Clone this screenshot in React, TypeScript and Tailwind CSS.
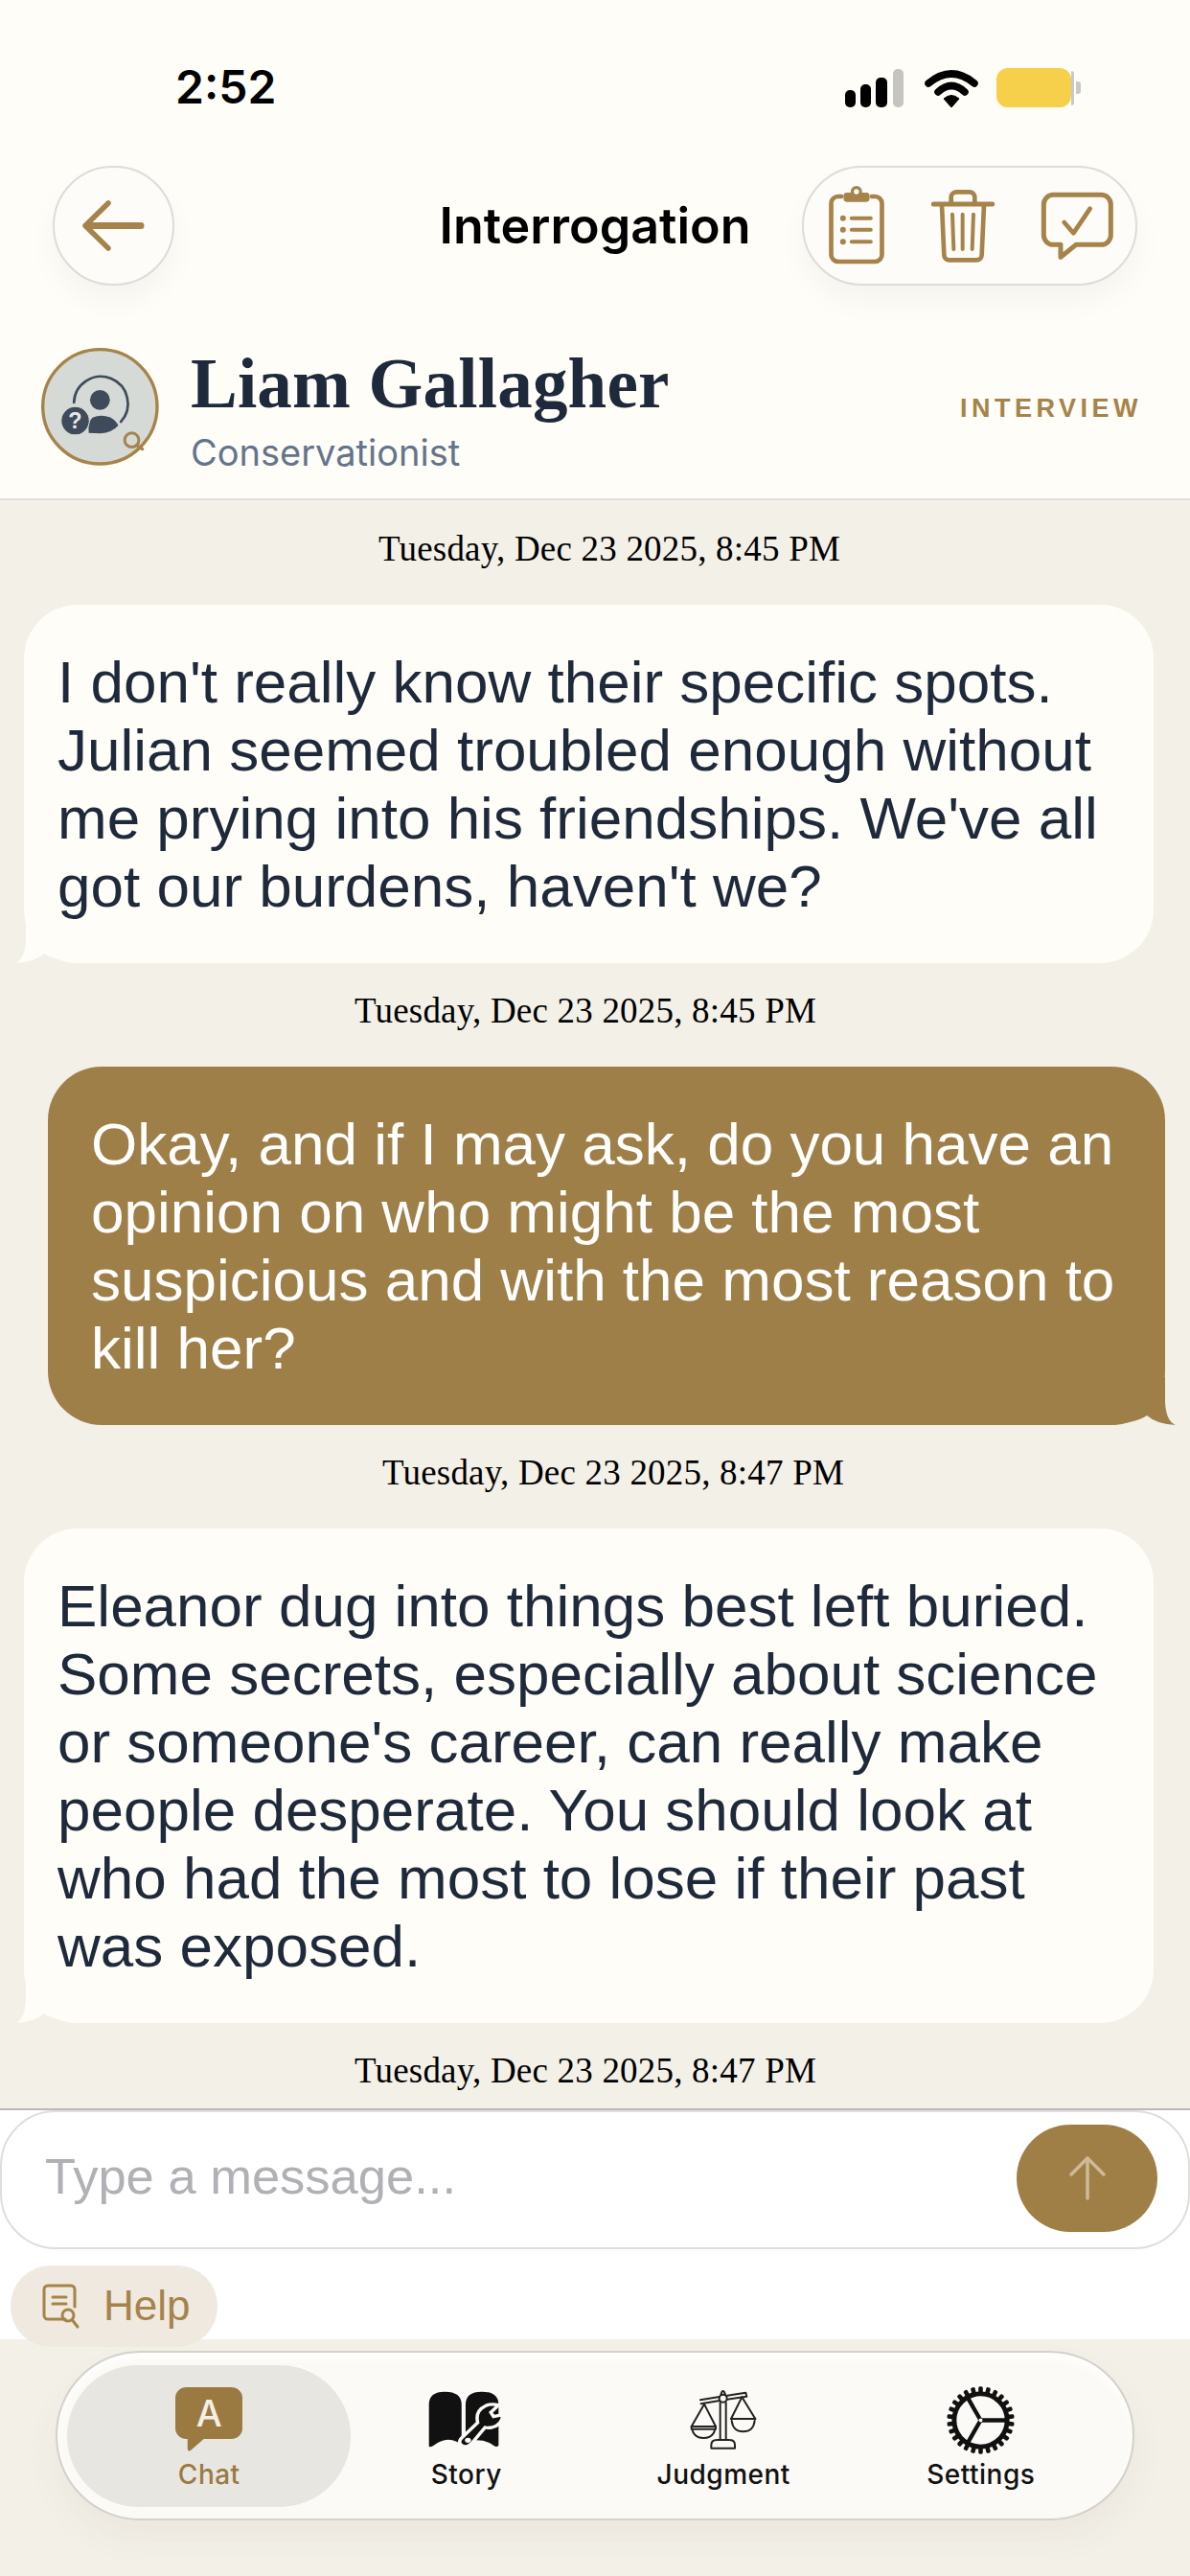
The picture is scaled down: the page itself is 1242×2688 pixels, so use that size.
import React from 'react';

const GOLD = '#a5834a';
const INK = '#111111';

const SignalIcon = () => (
  <svg width="62" height="40" viewBox="0 0 62 40">
    <rect x="0" y="22" width="11" height="18" rx="5" fill="#000" />
    <rect x="16" y="16" width="11" height="24" rx="5" fill="#000" />
    <rect x="32" y="9" width="12" height="31" rx="5" fill="#000" />
    <rect x="50" y="0" width="11" height="40" rx="5" fill="#c4c4c0" />
  </svg>
);

const WifiIcon = () => (
  <svg width="56" height="40" viewBox="0 0 56 40">
    <path d="M4 15 Q28 -5 52 15" fill="none" stroke="#000" strokeWidth="7.5" strokeLinecap="round" />
    <path d="M14 24 Q28 11 42 24" fill="none" stroke="#000" strokeWidth="7.5" strokeLinecap="round" />
    <path d="M20 31 Q28 24 36 31 L28 40 Z" fill="#000" stroke="#000" strokeWidth="1" strokeLinejoin="round" />
  </svg>
);

const BackIcon = () => (
  <svg width="66" height="54" viewBox="0 0 66 54" fill="none" stroke={GOLD} strokeLinecap="round" strokeLinejoin="round">
    <path d="M5 26.5 H61" strokeWidth="7" />
    <path d="M27 3 L3 26.5 L27 50" strokeWidth="5.5" />
  </svg>
);

const ClipboardIcon = () => (
  <svg width="62" height="85" viewBox="125 110 185 255" fill="none" stroke={GOLD} strokeWidth="14" strokeLinecap="round" strokeLinejoin="round">
    <path d="M170 146 H160 a22 22 0 0 0 -22 22 V328 a22 22 0 0 0 22 22 H275 a22 22 0 0 0 22 -22 V168 a22 22 0 0 0 -22 -22 H265" />
    <rect x="177" y="134" width="81" height="29" rx="10" fill={GOLD} stroke="none" />
    <circle cx="217" cy="131" r="13" fill="#fdfcf8" strokeWidth="10" />
    <g fill={GOLD} stroke="none">
      <circle cx="175" cy="214" r="9" />
      <circle cx="175" cy="250" r="9" />
      <circle cx="175" cy="288" r="9" />
    </g>
    <path d="M202 214 H262 M202 250 H262 M202 288 H262" strokeWidth="12" />
  </svg>
);

const TrashIcon = () => (
  <svg width="68" height="78" viewBox="447 115 204 234" fill="none" stroke={GOLD} strokeLinecap="round" strokeLinejoin="round">
    <path d="M457 163 H641" strokeWidth="15" />
    <path d="M512 158 V142 a17 17 0 0 1 17 -17 H569 a17 17 0 0 1 17 17 V158" strokeWidth="14" />
    <path d="M483 166 L490 322 a16 16 0 0 0 16 16 H592 a16 16 0 0 0 16 -16 L615 166" strokeWidth="14" />
    <path d="M516 195 L520 304 M548 195 V304 M582 195 L578 304" strokeWidth="12" />
  </svg>
);

const ChatCheckIcon = () => (
  <svg width="76" height="72" viewBox="792 122 228 216" fill="none" stroke={GOLD} strokeLinecap="round" strokeLinejoin="round">
    <path d="M832 132 H982 a30 30 0 0 1 30 30 V258 a30 30 0 0 1 -30 30 H903 L855 327 V288 H832 a30 30 0 0 1 -30 -30 V162 a30 30 0 0 1 30 -30 Z" strokeWidth="15" />
    <path d="M866 218 L895 252 L947 175" strokeWidth="14" />
  </svg>
);

const AvatarIcon = () => (
  <svg width="123" height="123" viewBox="70 70 367 367" className="shrink-0">
    <circle cx="253" cy="253" r="178" fill="#d5dad6" stroke={GOLD} strokeWidth="10" />
    <path d="M172 240 A84 84 0 1 1 318 300" fill="none" stroke="#3f4a5a" strokeWidth="8" strokeLinecap="round" />
    <circle cx="253" cy="232" r="31" fill="#3f4a5a" />
    <path d="M218 335 Q214 300 230 287 Q255 275 285 286 Q303 295 310 312 Q290 335 255 336 Z" fill="#3f4a5a" />
    <circle cx="176" cy="297" r="44" fill="#3f4a5a" stroke="#d5dad6" strokeWidth="3" />
    <text x="176" y="322" textAnchor="middle" fontSize="70" fontWeight="700" fill="#e5e8e6" fontFamily="'Liberation Sans', sans-serif">?</text>
    <circle cx="352" cy="357" r="22" fill="#d5dad6" stroke={GOLD} strokeWidth="9" />
    <path d="M368 373 L385 385" stroke={GOLD} strokeWidth="10" strokeLinecap="round" />
  </svg>
);

const HelpIcon = () => (
  <svg width="40" height="48" viewBox="0 0 40 48" fill="none" stroke={GOLD} strokeLinecap="round" strokeLinejoin="round" strokeWidth="3">
    <path d="M24 37 H6 a4 4 0 0 1 -4 -4 V6 a4 4 0 0 1 4 -4 H30 a4 4 0 0 1 4 4 V24" />
    <path d="M11 14 H25 M11 21 H25" />
    <circle cx="27" cy="33" r="6" />
    <path d="M31.5 38 L37 45" />
  </svg>
);

const SendIcon = () => (
  <svg width="40" height="48" viewBox="0 0 40 48" fill="none" stroke="#cdbb98" strokeLinecap="round" strokeLinejoin="round">
    <path d="M20 3 V45" strokeWidth="3.5" />
    <path d="M3 20 L20 3 L37 20" strokeWidth="3.5" />
  </svg>
);

const ChatTabIcon = () => (
  <div className="relative flex h-[68px] w-[70px] justify-center">
    <svg width="70" height="68" viewBox="0 0 66 68" preserveAspectRatio="none" className="absolute left-0 top-0">
      <path d="M11 0 H55 a11 11 0 0 1 11 11 V43 a11 11 0 0 1 -11 11 H28 L15 66 Q12 68 12 63 V54 H11 a11 11 0 0 1 -11 -11 V11 a11 11 0 0 1 11 -11 Z" fill="#9b7a41" />
    </svg>
    <span className="relative font-['Inter',sans-serif] text-[38px] leading-[54px] font-medium text-[#f3efe6]">A</span>
  </div>
);

const StoryIcon = () => (
  <svg width="80" height="60" viewBox="836 98 228 180" preserveAspectRatio="none">
    <path d="M838 270 V140 Q838 100 885 100 Q935 100 935 140 V250 Q928 262 920 256 Q885 240 850 270 Q838 276 838 270 Z" fill={INK} />
    <path d="M947 140 Q947 100 995 100 Q1045 100 1045 140 V268 Q1040 276 1030 268 Q1000 244 947 256 Z" fill={INK} />
    <path
      d="M935 245 L983 197 Q975 160 1005 145 Q1020 136 1045 142 L1022 165 L1030 178 L1058 172 Q1055 205 1025 212 Q1012 214 1005 212 L965 262 Q945 280 932 265 Q925 255 935 245 Z"
      fill={INK}
      stroke="#fbfaf6"
      strokeWidth="10"
    />
    <ellipse cx="954" cy="252" rx="9" ry="8" fill="#fbfaf6" />
  </svg>
);

const JudgmentIcon = () => (
  <svg width="70" height="64" viewBox="55 93 210 192" fill="none" stroke="#222" strokeWidth="6" strokeLinecap="round" strokeLinejoin="round">
    <path d="M88 127 L148 117 M172 113 L230 104 L233 116 L172 125 M148 129 L90 139 Z" />
    <circle cx="159" cy="122" r="12" />
    <path d="M152 110 Q159 88 166 110" />
    <path d="M150 135 V250 M168 135 V250" />
    <path d="M122 268 Q122 252 140 252 H178 Q196 252 196 268 V278 H122 Z" />
    <path d="M100 140 L60 210 M100 140 L136 210" />
    <path d="M60 210 H136 V218 H60 Z M62 218 Q68 246 98 246 Q128 246 134 218" />
    <path d="M218 118 L184 186 M218 118 L260 186" />
    <path d="M184 186 H260 M186 192 Q190 226 222 226 Q254 226 258 192" />
  </svg>
);

const GearIcon = () => (
  <svg width="73" height="73" viewBox="828 74 220 222">
    <circle cx="938" cy="185" r="84" fill="none" stroke={INK} strokeWidth="15" />
    {Array.from({ length: 26 }).map((_, i) => (
      <rect key={i} x="931" y="78" width="14" height="26" rx="5" fill={INK} transform={`rotate(${(i * 360) / 26} 938 185)`} />
    ))}
    <g stroke={INK} strokeWidth="13" strokeLinecap="round">
      <path d="M938 185 H1016" />
      <path d="M938 185 L899 253" />
      <path d="M938 185 L899 117" />
    </g>
    <circle cx="938" cy="185" r="6" fill="#fbfaf6" />
  </svg>
);

const BubbleTail = ({ side, color }: { side: 'left' | 'right'; color: string }) => (
  <svg
    width="70"
    height="50"
    viewBox="0 0 70 50"
    className={side === 'right' ? 'absolute bottom-0 right-[-11px]' : 'absolute bottom-0 left-[-9px] -scale-x-100'}
  >
    <path d="M0 50 Q28 48 40 40 Q50 49 70 50 Q60 46 59 26 L59 0 L0 0 Z" fill={color} />
  </svg>
);

const Timestamp = ({ children, offset }: { children: string; offset: string }) => (
  <div className={`mt-7 mb-9 h-11 whitespace-nowrap font-['Liberation_Serif',serif] text-[37px] leading-[44px] tracking-[0.2px] text-black ${offset}`}>
    {children}
  </div>
);

const IncomingBubble = ({ children }: { children: string }) => (
  <div className="relative ml-[25px] w-[1179px] rounded-[56px] bg-[#fffdf7] py-[45px] pl-[35px] pr-[20px] text-[62px] leading-[71px] text-[#1e293b]">
    <BubbleTail side="left" color="#fffdf7" />
    <span className="relative">{children}</span>
  </div>
);

const NavItem = ({ icon, label, active }: { icon: React.ReactNode; label: string; active?: boolean }) => (
  <div className="relative flex flex-col items-center pt-[36px]">
    {active && <div className="absolute bottom-[12px] left-[-14px] right-[-13px] top-[13px] rounded-[75px] bg-[#e8e6e1]" />}
    <div className="relative flex h-[68px] items-center justify-center">{icon}</div>
    <span className={`relative mt-[6px] font-['Inter',sans-serif] text-[28px] leading-[34px] font-medium tracking-[0.5px] ${active ? 'text-[#9b7a41]' : 'text-[#111]'}`}>
      {label}
    </span>
  </div>
);

export default function App() {
  return (
    <div className="flex h-[2688px] w-[1242px] flex-col overflow-hidden bg-[#f3f0e8] font-['Liberation_Sans',sans-serif]">
      {/* Header */}
      <header className="h-[522px] shrink-0 border-b-2 border-[#e0deda] bg-[#fffdf7]">
        <div className="flex h-[173px] items-start justify-between pl-[183px] pr-[114px] pt-[71px]">
          <span className="font-['Inter',sans-serif] text-[48px] leading-[40px] font-semibold text-black">2:52</span>
          <div className="flex items-center">
            <SignalIcon />
            <div className="ml-[21px]"><WifiIcon /></div>
            <div className="ml-[19px] flex items-center">
              <div className="h-[41px] w-[78px] rounded-[12px] bg-[#f6cf4b]" />
              <div className="h-[36px] w-[3px] rounded-r-[3px] bg-[#c9c9c5]" />
              <div className="ml-[2px] h-[13px] w-[5px] rounded-r-[3px] bg-[#c9c9c5]" />
            </div>
          </div>
        </div>

        <div className="grid h-[125px] grid-cols-[1fr_auto_1fr] items-center px-[55px]">
          <div className="flex h-[125px] w-[127px] items-center justify-center rounded-full border-2 border-[#dcdcd8] bg-[#fdfcf8] shadow-[0_16px_30px_rgba(0,0,0,0.04)]">
            <BackIcon />
          </div>
          <h1 className="font-['Inter',sans-serif] text-[52px] font-semibold text-black">Interrogation</h1>
          <div className="flex justify-end">
            <div className="flex h-[125px] w-[350px] items-center rounded-full border-2 border-[#dcdcd8] bg-[#fdfcf8] pl-[24px] shadow-[0_16px_30px_rgba(0,0,0,0.04)]">
              <ClipboardIcon />
              <div className="ml-[46px]"><TrashIcon /></div>
              <div className="ml-[47px]"><ChatCheckIcon /></div>
            </div>
          </div>
        </div>

        <div className="mt-[65px] flex items-start pl-[43px] pr-[50px]">
          <AvatarIcon />
          <div className="ml-[33px] flex-1">
            <div className="font-['Liberation_Serif',serif] text-[73px] leading-[76px] font-bold tracking-[0.2px] text-[#1e293b]">Liam Gallagher</div>
            <div className="mt-[11px] font-['Inter',sans-serif] text-[38px] leading-[44px] text-[#64748b]">Conservationist</div>
          </div>
          <span className="mt-[48px] text-[27px] leading-[30px] font-bold tracking-[4.5px] text-[#a5834a]">INTERVIEW</span>
        </div>
      </header>

      {/* Messages */}
      <main className="min-h-0 flex-1 overflow-hidden">
        <div className="h-px" />
        <Timestamp offset="ml-[395px]">Tuesday, Dec 23 2025, 8:45 PM</Timestamp>
        <IncomingBubble>I don't really know their specific spots. Julian seemed troubled enough without me prying into his friendships. We've all got our burdens, haven't we?</IncomingBubble>
        <Timestamp offset="ml-[370px]">Tuesday, Dec 23 2025, 8:45 PM</Timestamp>
        <div className="relative ml-[50px] w-[1166px] rounded-[56px] bg-[#9f7f48] py-[45px] pl-[45px] pr-[40px] text-[62px] leading-[71px] text-white">
          <BubbleTail side="right" color="#9f7f48" />
          <span className="relative">Okay, and if I may ask, do you have an opinion on who might be the most suspicious and with the most reason to kill her?</span>
        </div>
        <Timestamp offset="ml-[399px]">Tuesday, Dec 23 2025, 8:47 PM</Timestamp>
        <IncomingBubble>Eleanor dug into things best left buried. Some secrets, especially about science or someone's career, can really make people desperate. You should look at who had the most to lose if their past was exposed.</IncomingBubble>
        <Timestamp offset="ml-[370px]">Tuesday, Dec 23 2025, 8:47 PM</Timestamp>
      </main>

      {/* Composer */}
      <section className="relative z-10 h-[241px] shrink-0 border-t-2 border-[#b9b9b5] bg-white">
        <div className="flex h-[145px] items-center justify-between rounded-[58px] border-2 border-[#dededc] bg-white pl-[45px] pr-[32px]">
          <span className="pb-[6px] text-[52.5px] text-[#b0b0b5]">Type a message...</span>
          <div className="mb-[4px] flex h-[112px] w-[147px] items-center justify-center rounded-full bg-[#a07f47]">
            <SendIcon />
          </div>
        </div>
        <div className="ml-[11px] mt-[17px] flex h-[85px] w-[216px] items-center rounded-[42px] bg-[#efe9df] pl-[33px]">
          <HelpIcon />
          <span className="ml-[24px] pb-[2px] text-[44px] text-[#a5834a]">Help</span>
        </div>
      </section>

      {/* Tab bar */}
      <nav className="h-[247px] shrink-0 bg-[#f3f0e8] pt-[12px]">
        <div className="ml-[58px] grid h-[177px] w-[1126px] grid-cols-4 rounded-[88px] border-2 border-[#d3d1c9] bg-[#fbfaf6] px-[24px] shadow-[0_18px_36px_rgba(90,80,50,0.05),inset_0_6px_12px_rgba(255,255,255,0.8)]">
          <NavItem active icon={<ChatTabIcon />} label="Chat" />
          <NavItem icon={<StoryIcon />} label="Story" />
          <NavItem icon={<JudgmentIcon />} label="Judgment" />
          <NavItem icon={<GearIcon />} label="Settings" />
        </div>
      </nav>
    </div>
  );
}
